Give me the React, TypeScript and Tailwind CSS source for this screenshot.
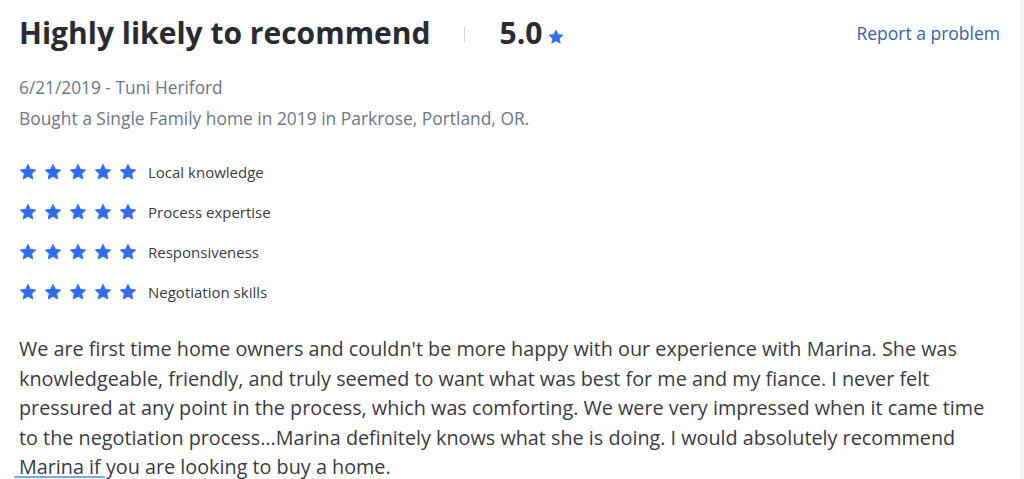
import React from "react";

const Star = ({ className }: { className: string }) => (
  <svg viewBox="0 0 24 24" className={className} fill="currentColor">
    <path d="M12 1.8l3.05 6.6 7.2.85-5.33 4.93 1.43 7.12L12 17.72 5.65 21.3l1.43-7.12L1.75 9.25l7.2-.85z" strokeLinejoin="round" stroke="currentColor" strokeWidth="1.2" />
  </svg>
);

const ratings = ["Local knowledge", "Process expertise", "Responsiveness", "Negotiation skills"];

export default function App() {
  return (
    <div className="w-[1024px] h-[479px] overflow-hidden bg-white flex" style={{ fontFamily: '"Open Sans", sans-serif' }}>
      <div className="flex-1 pl-[19px] pr-[20px] pt-[13px]">
        <div className="flex items-center justify-between h-[40px]">
          <div className="flex items-center">
            <h1 className="text-[30px] font-bold text-[#2a2a33] leading-[40px]">Highly likely to recommend</h1>
            <div className="w-px h-[16px] bg-[#d4d4d8] ml-[33px] mr-[35px] mt-[2px]" />
            <span className="text-[30px] font-bold text-[#2a2a33] leading-[40px]">5.0</span>
            <Star className="w-[16px] h-[16px] text-[#2f6cf5] ml-[6px] mt-[7px]" />
          </div>
          <a className="text-[17.5px] text-[#3b5ea8]">Report a problem</a>
        </div>
        <div className="mt-[20px] text-[17.3px] text-[#6b7689] leading-[30px]">6/21/2019 - Tuni Heriford</div>
        <div className="text-[17.4px] text-[#6b7689] leading-[30px]">Bought a Single Family home in 2019 in Parkrose, Portland, OR.</div>
        <div className="mt-[28px] flex flex-col gap-[18px]">
          {ratings.map((r) => (
            <div key={r} className="flex items-center h-[22px]">
              <div className="flex gap-[7px]">
                {[0, 1, 2, 3, 4].map((i) => (
                  <Star key={i} className="w-[18px] h-[18px] text-[#2f6cf5]" />
                ))}
              </div>
              <span className="ml-[11px] text-[15px] text-[#3a3a44]">{r}</span>
            </div>
          ))}
        </div>
        <p className="mt-[31px] text-[19.8px] leading-[29.6px] text-[#3a3a44]">
          We are first time home owners and couldn't be more happy with our experience with Marina. She was knowledgeable, friendly, and truly seemed to want what was best for me and my fiance. I never felt pressured at any point in the process, which was comforting. We were very impressed when it came time to the negotiation process...Marina definitely knows what she is doing. I would absolutely recommend{" "}
          <span className="relative inline-block">
            Marina if
            <span className="absolute left-[-5px] right-[-4px] bottom-[4px] h-[2px] bg-[#7aa7f0] rounded" />
          </span>{" "}
          you are looking to buy a home.
        </p>
      </div>
      <div className="w-[4px] bg-[#f3f3f3]" />
    </div>
  );
}
